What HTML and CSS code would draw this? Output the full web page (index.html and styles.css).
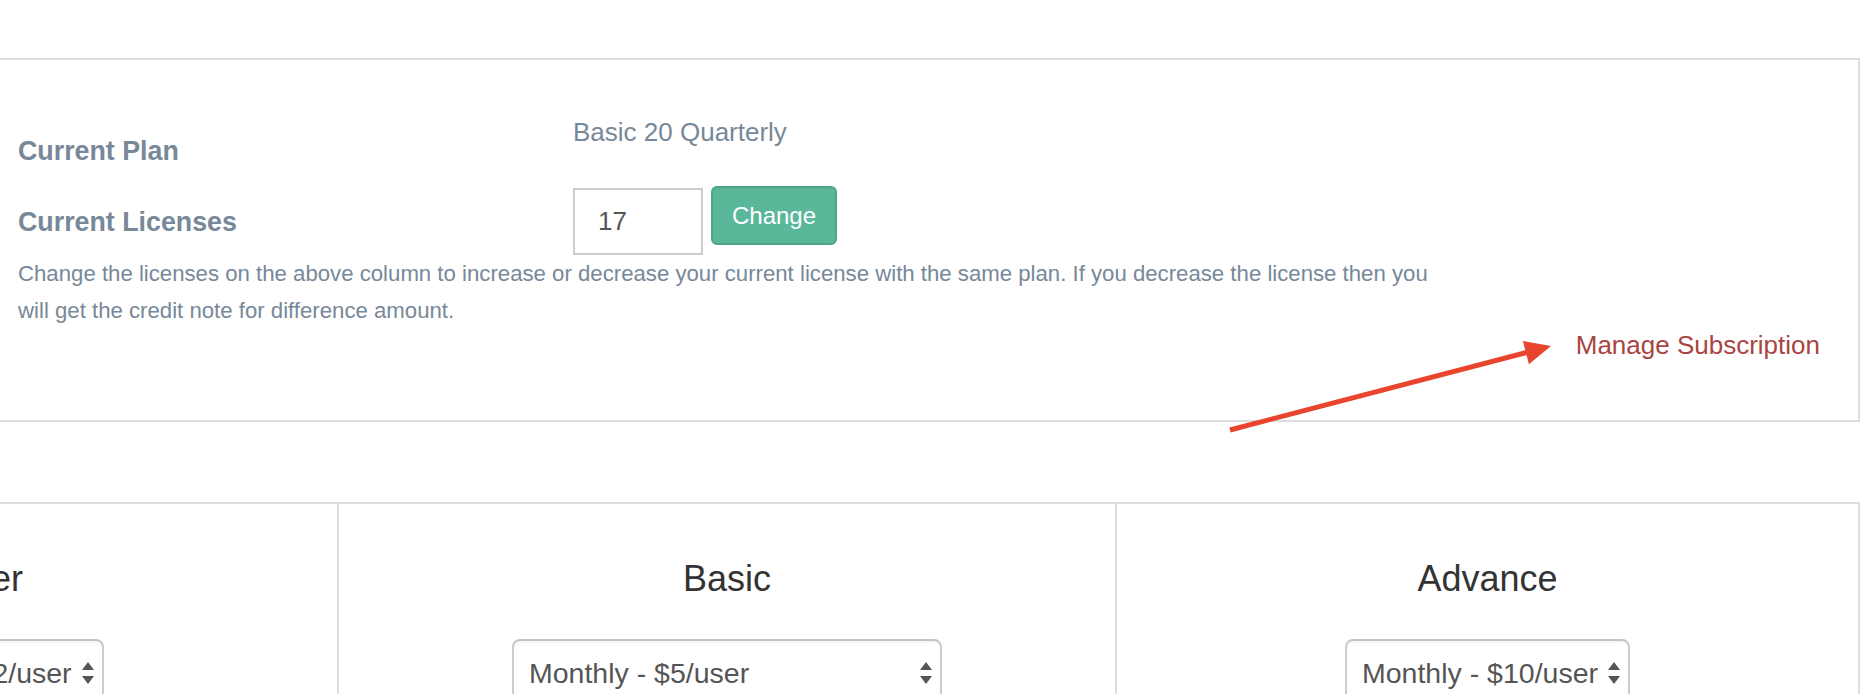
FILE: index.html
```html
<!DOCTYPE html>
<html lang="en">
<head>
<meta charset="utf-8">
<title>Subscription</title>
<link rel="stylesheet" href="styles.css">
</head>
<body>
<div class="page">
  <section class="summary">
    <div class="row row-plan">
      <div class="label">Current Plan</div>
      <div class="value">Basic 20 Quarterly</div>
    </div>
    <div class="row row-licenses">
      <div class="label">Current Licenses</div>
      <div class="controls">
        <input class="licenses" type="text" value="17">
        <button class="btn-change" type="button">Change</button>
      </div>
    </div>
    <p class="note">Change the licenses on the above column to increase or decrease your current license with the same plan. If you decrease the license then you will get the credit note for difference amount.</p>
    <div class="manage"><a class="manage-link" href="#">Manage Subscription</a></div>
  </section>

  <section class="plans">
    <div class="plan">
      <h3 class="plan-title">Starter</h3>
      <div class="select">
        <span class="select-text">Monthly - $2/user</span>
        <svg class="select-arrows" width="12" height="22" viewBox="0 0 12 22"><polygon points="0,8 6,0 12,8"/><polygon points="0,14 12,14 6,22"/></svg>
      </div>
    </div>
    <div class="plan">
      <h3 class="plan-title">Basic</h3>
      <div class="select select-wide">
        <span class="select-text">Monthly - $5/user</span>
        <svg class="select-arrows" width="12" height="22" viewBox="0 0 12 22"><polygon points="0,8 6,0 12,8"/><polygon points="0,14 12,14 6,22"/></svg>
      </div>
    </div>
    <div class="plan">
      <h3 class="plan-title">Advance</h3>
      <div class="select">
        <span class="select-text">Monthly - $10/user</span>
        <svg class="select-arrows" width="12" height="22" viewBox="0 0 12 22"><polygon points="0,8 6,0 12,8"/><polygon points="0,14 12,14 6,22"/></svg>
      </div>
    </div>
  </section>
</div>

<svg class="annotation" width="1862" height="694" viewBox="0 0 1862 694">
  <line x1="1230" y1="430" x2="1527" y2="352.3" stroke="#e9442c" stroke-width="5"/>
  <polygon points="1551,346 1522.9,341 1528.9,364.2" fill="#e9442c"/>
</svg>
</body>
</html>
```

FILE: styles.css
```css
html, body {
  margin: 0;
  padding: 0;
  background: #ffffff;
  overflow: hidden;
}

body {
  height: 694px;
  position: relative;
  font-family: "Liberation Sans", Arial, Helvetica, sans-serif;
  color: #333333;
}

.page {
  padding-top: 58px;
}

/* ---- summary panel ---- */
.summary {
  margin: 0 2px 0 -2px;
  border: 2px solid #dddddd;
  padding: 54px 38px 59px 18px;
  color: #778899;
}

.row {
  display: flex;
  align-items: flex-start;
}

.label {
  width: 555px;
  flex: none;
  font-weight: bold;
  font-size: 26.8px;
  line-height: 37px;
}

.value {
  font-size: 26px;
  line-height: 37px;
}

.row-plan .label {
  margin-top: 19px;
}

.row-licenses {
  margin-top: 16px;
}

.row-licenses .label {
  margin-top: 17.5px;
}

.controls {
  display: flex;
  align-items: flex-start;
  gap: 8px;
}

.licenses {
  margin: 2px 0 0 0;
  width: 130px;
  height: 67px;
  box-sizing: border-box;
  border: 2px solid #cccccc;
  border-radius: 0;
  padding: 0 0 0 23px;
  font-family: "Liberation Sans", Arial, sans-serif;
  font-size: 26px;
  color: #555555;
  background: #ffffff;
  outline: none;
}

.btn-change {
  width: 126px;
  height: 59px;
  box-sizing: border-box;
  margin: 0;
  padding: 0;
  border: 2px solid #4ea487;
  border-radius: 6px;
  background: #5ab79a;
  color: #ffffff;
  font-family: "Liberation Sans", Arial, sans-serif;
  font-size: 24px;
  line-height: 1;
  cursor: pointer;
}

.note {
  margin: 0;
  width: 1430px;
  font-size: 22.2px;
  line-height: 37px;
}

.manage {
  text-align: right;
  font-size: 26px;
  line-height: 32px;
}

.manage-link {
  color: #a94442;
  text-decoration: none;
}

/* ---- plans panel ---- */
.plans {
  margin: 80px 2px 0 -401px;
  border: 2px solid #dddddd;
  border-bottom: none;
  display: grid;
  grid-template-columns: 736px 778px 1fr;
  height: 400px;
}

.plan {
  padding-top: 55px;
  text-align: center;
}

.plan + .plan {
  border-left: 2px solid #dddddd;
}

.plan-title {
  margin: 0 0 40px 0;
  font-size: 36px;
  line-height: 40px;
  font-weight: normal;
  color: #333333;
}

.select {
  display: inline-flex;
  align-items: center;
  gap: 10px;
  height: 68px;
  box-sizing: border-box;
  padding: 0 8px 0 15px;
  border: 2px solid #cccccc;
  border-top-color: #c4c4c4;
  border-radius: 8px;
  background: #ffffff;
  box-shadow: inset 0 2px 2px rgba(0, 0, 0, 0.04);
  font-size: 28.5px;
  color: #555555;
  text-align: left;
}

.select-wide {
  width: 430px;
  justify-content: space-between;
}

.select-arrows {
  flex: none;
  fill: #555555;
}

/* ---- annotation overlay ---- */
.annotation {
  position: absolute;
  left: 0;
  top: 0;
  pointer-events: none;
}
```
